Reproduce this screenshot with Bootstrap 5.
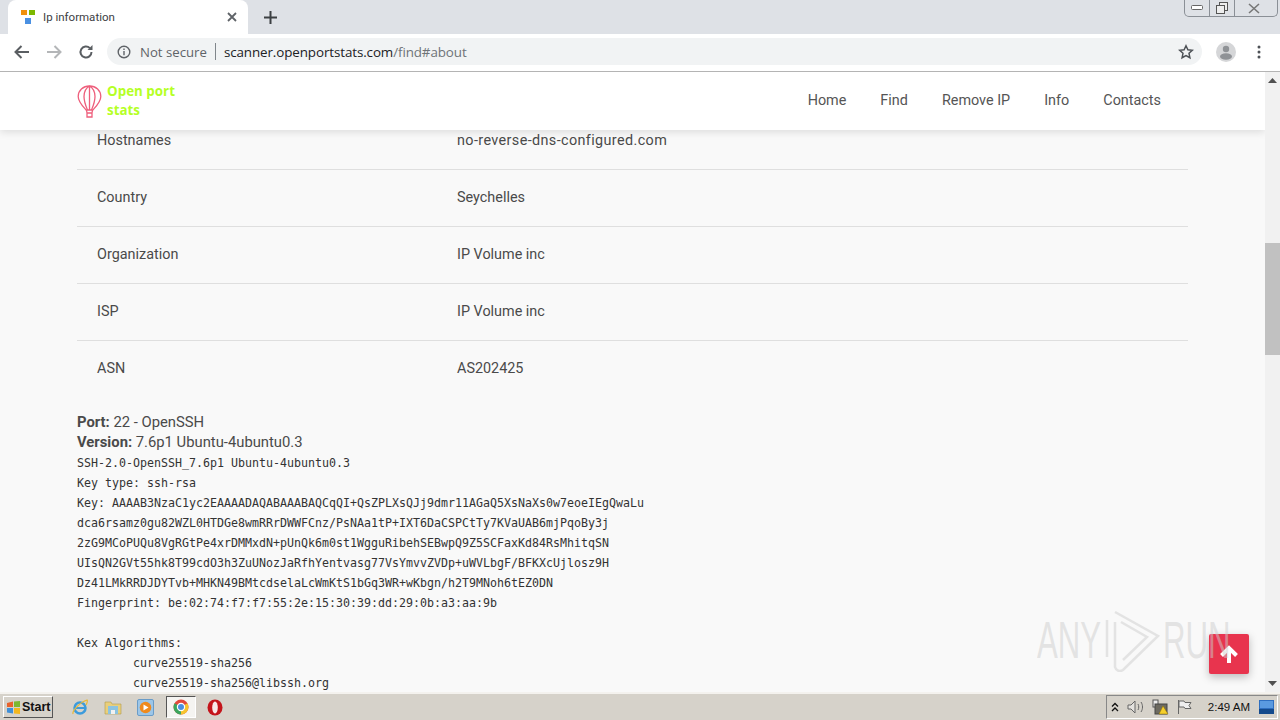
<!DOCTYPE html>
<html lang="en">

<head>
    <meta charset="UTF-8">
    <meta name="viewport" content="width=device-width, initial-scale=1.0">
    <link href="https://cdn.jsdelivr.net/npm/bootstrap@5.3.3/dist/css/bootstrap.min.css" rel="stylesheet">
    <script src="https://cdn.jsdelivr.net/npm/bootstrap@5.3.3/dist/js/bootstrap.bundle.min.js"></script>
    <title>Ip information</title>
    <style>
        html, body { height: 720px; overflow: hidden; }

        body { background: #f9f9f9; font-family: Roboto, "Liberation Sans", sans-serif; color: #4a4a4a; }

        .screen { height: 720px; }

        /* browser chrome */
        .tabstrip { height: 34px; background: #dee1e6; flex: none; }
        .tabitem { width: 240px; margin-left: 8px; background: #fff; border-radius: 8px 8px 0 0; padding: 0 10px 0 13px; font: 11.5px Roboto, sans-serif; color: #3c4043; }
        .tabitem span { flex: 1; margin-left: 7px; }
        .newtab { margin-left: 16px; }
        .winbtns { margin: 0 2px 0 auto; height: 17px; width: 94px; border: 1px solid #8a8f96; border-top: 0; border-radius: 0 0 5px 5px; align-self: flex-start; }
        .winbtns div { width: 25px; flex: none; border-right: 1px solid #8a8f96; }
        .winbtns div:last-child { flex: 1; border-right: 0; padding-right: 4px; }
        .toolbar { height: 38px; background: #fff; border-bottom: 1px solid #b4b4b4; flex: none; padding: 0 0 2px 14px; }
        .omni { width: 1095px; height: 27px; margin-left: 13px; background: #f1f3f4; border-radius: 14px; padding: 0 8px 0 10px; font: 13.4px "Open Sans", sans-serif; }
        .omni .insecure { color: #5f6368; margin-left: 9px; font-size: 13.2px; }
        .omni .sep { width: 1px; height: 17px; background: #80868b; margin: 0 8px; }
        .omni .host { color: #202124; letter-spacing: -.1px; }
        .omni .tail { color: #6f7478; letter-spacing: -.1px; }
        .avatar { margin-left: 14px; }
        .dots { margin-left: 21px; }

        /* page */
        .viewarea { min-height: 0; }
        .pagecol { min-width: 0; overflow: hidden; }
        .pagewrap { width: 1111px; margin-left: 77px; }
        .topbar { height: 58px; background: #fff; box-shadow: 0 2px 8px rgba(0,0,0,.12); z-index: 5; padding: 0; flex: none; }
        .topbar .pagewrap { display: flex; align-items: center; }
        .brandbox { font-size: 13.4px; font-weight: 700; line-height: 19px; color: #b5ff26; font-family: "Open Sans", sans-serif; margin: 0 0 1px 5px; width: 80px; }
        .topbar.navbar-expand .navbar-nav .nav-link { color: #555; font-size: 14.4px; padding: 0 17px; }
        .topbar .navbar-nav { margin-right: 10px; }

        .infotable { margin: -18px 0 0; --bs-table-bg: transparent; --bs-table-color: #4a4a4a; }
        .infotable td { height: 57px; padding: 0 20px; vertical-align: middle; font-size: 14.4px; border-color: #dfdfdf; }
        .infotable td:first-child { width: 360px; }
        .infotable tr:first-child td { padding-top: 2px; }
        .infotable tr:last-child td { border-bottom: 0; }
        .hostval { letter-spacing: .38px; }

        .portinfo { margin-top: 15px; font-size: 14.8px; line-height: 20px; color: #4a4a4a; }
        .portinfo b { font-weight: 700; }
        .banner { margin: 1px 0 0; font: 11.63px/20px "DejaVu Sans Mono", monospace; color: #333; overflow: visible; }

        /* scrollbar */
        .sbar { width: 15px; background: #f1f1f1; flex: none; }
        .sbar-up, .sbar-down { height: 17px; flex: none; }
        .sbar-thumb { height: 112px; background: #c1c1c1; margin-top: 154px; }

        /* overlays */
        .totop { right: 31px; bottom: 18px; width: 40px; height: 40px; background: #e8344e; border-radius: 2px; box-shadow: 0 3px 8px rgba(0,0,0,.25); z-index: 6; }
        .anywm { left: 1037px; top: 536px; z-index: 7; height: 64px; color: rgba(205,205,205,.5); font: 52px/64px "Liberation Sans", sans-serif; }
        .wmword { display: inline-block; width: 66px; transform: scaleX(.6); transform-origin: left center; white-space: nowrap; }

        /* taskbar */
        .taskbar { height: 28px; background: #d6d2ca; border-top: 2px solid #f4f2ee; flex: none; padding-left: 3px; }
        .startbtn { width: 50px; height: 22px; background: #d6d2ca; border: 1px solid; border-color: #fff #555 #555 #fff; font: 700 12.5px "Liberation Sans", sans-serif; color: #111; padding-left: 2px; gap: 1px; }
        .tasksicons { margin-left: 10px; gap: 0; }
        .tbicon { width: 33px; height: 22px; display: flex; align-items: center; justify-content: center; }
        .tbicon.active { width: 30px; margin: 0 2px 0 4px; background: #f5f4f1; border: 1px solid; border-color: #555 #fff #fff #555; }
        .traybox { margin-left: auto; margin-right: 2px; width: 172px; height: 24px; border: 1px solid; border-color: #888 #fff #fff #888; padding: 0 3px 0 4px; font: 11.5px "Liberation Sans", sans-serif; color: #111; }
        .traybox .clock { margin-left: auto; margin-right: 9px; }
    </style>
</head>

<body>
    <div class="screen d-flex flex-column">

        <div class="tabstrip d-flex">
            <div class="tabitem d-flex align-items-center">
                <svg width="15" height="15" viewBox="0 0 15 15"><rect x="0" y="0" width="6" height="5" fill="#f0900c"/><rect x="8" y="0" width="6" height="5" fill="#7cb800"/><rect x="4" y="8" width="6" height="6" fill="#4a90e2"/></svg>
                <span>Ip information</span>
                <svg width="12" height="12" viewBox="0 0 12 12" stroke="#5f6368" stroke-width="1.8"><path d="M2 2l8 8M10 2l-8 8"/></svg>
            </div>
            <svg class="newtab align-self-center" width="13" height="13" viewBox="0 0 13 13" stroke="#3c4043" stroke-width="2"><path d="M6.5 0v13M0 6.500h13"/></svg>
            <div class="winbtns d-flex">
                <div class="d-flex align-items-center justify-content-center"><svg width="12" height="6" viewBox="0 0 12 6"><rect x=".5" y=".5" width="11" height="4" rx="1" fill="#fff" stroke="#666"/></svg></div>
                <div class="d-flex align-items-center justify-content-center"><svg width="12" height="12" viewBox="0 0 12 12" fill="#eee" stroke="#555"><rect x="3.500" y=".5" width="8" height="8"/><rect x=".5" y="3.500" width="8" height="8"/></svg></div>
                <div class="d-flex align-items-center justify-content-center"><svg width="12" height="11" viewBox="0 0 12 11" stroke="#777" stroke-width="1.600"><path d="M1 1l10 9M11 1L1 10"/></svg></div>
            </div>
        </div>

        <div class="toolbar d-flex align-items-center">
            <svg width="16" height="14" viewBox="0 0 16 14" fill="none" stroke="#5a5e62" stroke-width="2"><path d="M15 7H2M7.500 1L1.500 7l6 6"/></svg>
            <svg class="ms-3" width="16" height="14" viewBox="0 0 16 14" fill="none" stroke="#b4b6b8" stroke-width="2"><path d="M1 7h13M8.500 1l6 6-6 6"/></svg>
            <svg class="ms-3" width="16" height="16" viewBox="0 0 16 16" fill="none" stroke="#5a5e62" stroke-width="2"><path d="M13.500 8a5.500 5.500 0 1 1-1.600-3.900"/><path d="M14.500 1v5h-5z" fill="#5a5e62" stroke="none"/></svg>
            <div class="omni d-flex align-items-center">
                <svg width="14" height="14" viewBox="0 0 14 14" fill="none" stroke="#5f6368" stroke-width="1.400"><circle cx="7" cy="7" r="5.800"/><path d="M7 6v4.200M7 3.500v1.500"/></svg>
                <span class="insecure">Not secure</span>
                <span class="sep"></span>
                <span class="host">scanner.openportstats.com</span><span class="tail">/find#about</span>
                <svg class="ms-auto" width="16" height="16" viewBox="0 0 16 16" fill="none" stroke="#4d5156" stroke-width="1.500"><path d="M8 1.800l1.900 4 4.400.5-3.300 3 .9 4.400L8 11.500l-3.900 2.200.9-4.400-3.300-3 4.400-.5z"/></svg>
            </div>
            <svg class="avatar" width="20" height="20" viewBox="0 0 20 20"><circle cx="10" cy="10" r="10" fill="#d5d6d8"/><circle cx="10" cy="7" r="3.200" fill="#8f9296"/><ellipse cx="10" cy="14.500" rx="6" ry="3.200" fill="#8f9296"/></svg>
            <svg class="dots" width="4" height="14" viewBox="0 0 4 14" fill="#4d5156"><circle cx="2" cy="2" r="1.500"/><circle cx="2" cy="7" r="1.500"/><circle cx="2" cy="12" r="1.500"/></svg>
        </div>

        <div class="viewarea d-flex flex-grow-1 position-relative">
            <div class="pagecol flex-grow-1 d-flex flex-column">
                <nav class="topbar navbar navbar-expand position-relative">
                    <div class="pagewrap">
                        <svg width="25" height="33" viewBox="0 0 25 33" fill="none" stroke="#ee5f7c" stroke-width="1.300"><path d="M12.500 1C6 1 1.200 5.500 1.200 11.500c0 5.500 4.800 10 8 13.500h6.600c3.200-3.500 8-8 8-13.500C23.800 5.500 19 1 12.500 1z"/><path d="M12.500 1C9 3 7 7 7 11.500c0 5 2 10 3.500 13.500M12.500 1C16 3 18 7 18 11.500c0 5-2 10-3.500 13.500M12.500 1v24M9.500 25l.5 3h5l.5-3M10 28h5v4h-5z"/></svg>
                        <div class="brandbox">Open port<br>stats</div>
                        <ul class="navbar-nav ms-auto">
                            <li class="nav-item"><a class="nav-link" href="#">Home</a></li>
                            <li class="nav-item"><a class="nav-link" href="#">Find</a></li>
                            <li class="nav-item"><a class="nav-link" href="#">Remove IP</a></li>
                            <li class="nav-item"><a class="nav-link" href="#">Info</a></li>
                            <li class="nav-item"><a class="nav-link" href="#">Contacts</a></li>
                        </ul>
                    </div>
                </nav>

                <div class="pagewrap">
                    <table class="table infotable">
                        <tbody>
                            <tr><td>Hostnames</td><td class="hostval">no-reverse-dns-configured.com</td></tr>
                            <tr><td>Country</td><td>Seychelles</td></tr>
                            <tr><td>Organization</td><td>IP Volume inc</td></tr>
                            <tr><td>ISP</td><td>IP Volume inc</td></tr>
                            <tr><td>ASN</td><td>AS202425</td></tr>
                        </tbody>
                    </table>
                    <div class="portinfo">
                        <div><b>Port:</b> 22 - OpenSSH</div>
                        <div><b>Version:</b> 7.6p1 Ubuntu-4ubuntu0.3</div>
                    </div>
                    <pre class="banner">SSH-2.0-OpenSSH_7.6p1 Ubuntu-4ubuntu0.3
Key type: ssh-rsa
Key: AAAAB3NzaC1yc2EAAAADAQABAAABAQCqQI+QsZPLXsQJj9dmr11AGaQ5XsNaXs0w7eoeIEgQwaLu
dca6rsamz0gu82WZL0HTDGe8wmRRrDWWFCnz/PsNAa1tP+IXT6DaCSPCtTy7KVaUAB6mjPqoBy3j
2zG9MCoPUQu8VgRGtPe4xrDMMxdN+pUnQk6m0st1WgguRibehSEBwpQ9Z5SCFaxKd84RsMhitqSN
UIsQN2GVt55hk8T99cdO3h3ZuUNozJaRfhYentvasg77VsYmvvZVDp+uWVLbgF/BFKXcUjlosz9H
Dz41LMkRRDJDYTvb+MHKN49BMtcdselaLcWmKtS1bGq3WR+wKbgn/h2T9MNoh6tEZ0DN
Fingerprint: be:02:74:f7:f7:55:2e:15:30:39:dd:29:0b:a3:aa:9b

Kex Algorithms:
        curve25519-sha256
        curve25519-sha256@libssh.org</pre>
                </div>
            </div>

            <div class="sbar d-flex flex-column">
                <div class="sbar-up d-flex align-items-center justify-content-center"><svg width="9" height="5" viewBox="0 0 9 5" fill="#505050"><path d="M4.500 0L9 5H0z"/></svg></div>
                <div class="sbar-thumb"></div>
                <div class="sbar-down mt-auto d-flex align-items-center justify-content-center"><svg width="9" height="5" viewBox="0 0 9 5" fill="#505050"><path d="M4.500 5L9 0H0z"/></svg></div>
            </div>

            <a href="#" class="totop position-absolute d-flex align-items-center justify-content-center">
                <svg width="18" height="18" viewBox="0 0 18 18" fill="none" stroke="#fff" stroke-width="4"><path d="M9 18V4M1.500 10.500L9 3l7.500 7.500"/></svg>
            </a>
            <div class="anywm position-absolute d-flex align-items-center">
                <span class="wmword">ANY</span>
                <svg class="wmtri" width="60" height="64" viewBox="0 0 60 64" fill="none" stroke="rgba(205,205,205,.5)" stroke-width="2.500"><path d="M4 12v37M12 4l43 24-35 34c-3 2-7 1-8-3V14"/><path d="M18 14l26 15-24 23"/></svg>
                <span class="wmword">RUN</span>
            </div>
        </div>

        <div class="taskbar d-flex align-items-center">
            <div class="startbtn d-flex align-items-center">
                <svg width="15" height="15" viewBox="0 0 15 15"><path d="M1 3l6-1.500v5.500H1z" fill="#e8622c"/><path d="M8 1.500L14 1v6H8z" fill="#7cb82f"/><path d="M1 8h6v5.500l-6-1z" fill="#3f8fd8"/><path d="M8 8h6v6l-6-.5z" fill="#f3b71f"/></svg>
                Start
            </div>
            <div class="tasksicons d-flex align-items-center">
                <div class="tbicon">
                    <svg width="18" height="18" viewBox="0 0 18 18" fill="none"><circle cx="9" cy="10" r="5.500" stroke="#3c9bdc" stroke-width="2.500"/><path d="M4 10h10" stroke="#3c9bdc" stroke-width="2"/><path d="M2 16C1 13 9 4 16 2c1 1 0 3-1 5" stroke="#e8b93a" stroke-width="1.300"/></svg>
                </div>
                <div class="tbicon">
                    <svg width="18" height="16" viewBox="0 0 18 16"><path d="M1 3h6l1 2h9v10H1z" fill="#e9cf7c" stroke="#b49a4a" stroke-width=".6"/><rect x="4" y="7" width="10" height="8" fill="#8cc3e0"/><rect x="7" y="11" width="4" height="4" fill="#f1f1f1"/></svg>
                </div>
                <div class="tbicon">
                    <svg width="17" height="17" viewBox="0 0 17 17"><rect x=".5" y=".5" width="16" height="16" rx="1.500" fill="#9cc6e8" stroke="#6a9cc8"/><circle cx="8.500" cy="8.500" r="5.800" fill="#ef8a1d"/><path d="M6.500 5.500l5 3-5 3z" fill="#fff"/></svg>
                </div>
                <div class="tbicon active">
                    <svg width="16" height="16" viewBox="0 0 16 16"><circle cx="8" cy="8" r="7.500" fill="#e2493b"/><path d="M8 8L14.500 4.300A7.500 7.500 0 0 1 8 15.500z" fill="#f6c42d"/><path d="M8 8v7.500A7.500 7.500 0 0 1 1.500 4.300z" fill="#3ba55c"/><circle cx="8" cy="8" r="3.600" fill="#4a8fe0" stroke="#fff" stroke-width="1.200"/></svg>
                </div>
                <div class="tbicon">
                    <svg width="16" height="17" viewBox="0 0 16 17"><ellipse cx="8" cy="8.500" rx="7.500" ry="8" fill="#c4141b"/><ellipse cx="8" cy="8.500" rx="2.800" ry="6" fill="#f8e8e8"/></svg>
                </div>
            </div>
            <div class="traybox d-flex align-items-center">
                <svg width="8" height="10" viewBox="0 0 8 10" fill="none" stroke="#111" stroke-width="1.300"><path d="M1 4.500l3-3 3 3M1 9l3-3 3 3"/></svg>
                <svg class="ms-2" width="17" height="14" viewBox="0 0 17 14" fill="#e4e2de" stroke="#666"><path d="M1 5h3l4-4v12l-4-4H1z"/><path d="M11 4c1 2 1 4 0 6M14 2c2 3 2 7 0 10" fill="none"/></svg>
                <svg class="ms-2" width="17" height="16" viewBox="0 0 17 16"><rect x="1" y="1" width="5" height="7" fill="#eee" stroke="#555"/><rect x="3" y="5" width="12" height="10" fill="#6d6a60" stroke="#444"/><path d="M11 7l5 8H7z" fill="#f6cf2b" stroke="#8a6d00" stroke-width=".5"/></svg>
                <svg class="ms-2" width="15" height="16" viewBox="0 0 15 16" fill="#eee" stroke="#666"><path d="M1.500 1v14" fill="none"/><path d="M2 2h5l1 1.500h6l-2 3 2 3H8L7 8H2z"/></svg>
                <span class="clock">2:49 AM</span>
                <svg width="15" height="14" viewBox="0 0 15 14"><rect width="15" height="14" fill="#2f6fc0"/><rect y="9" width="15" height="5" fill="#144a8c"/><rect x="1" y="1" width="13" height="7" fill="#5a9ae0"/></svg>
            </div>
        </div>
    </div>
</body>

</html>
